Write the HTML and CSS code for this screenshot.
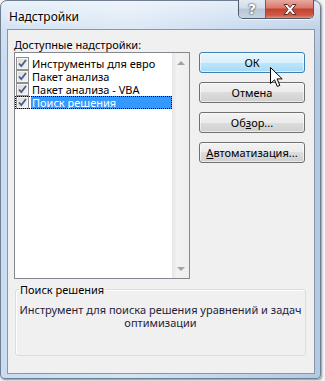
FILE: index.html
```html
<!DOCTYPE html>
<html lang="ru">
<head>
  <meta charset="UTF-8" />
  <title>Надстройки</title>
  <link rel="stylesheet" href="styles.css">
</head>
<body>
  <div class="window">
    <div class="titlebar">
      <span class="title">Надстройки</span>
      <div class="caption-buttons">
        <div class="cap help">?</div>
        <div class="cap close">
          <svg width="14" height="11" viewBox="0 0 14 11">
            <path d="M1 0.5 L4.5 0.5 L7 3.5 L9.5 0.5 L13 0.5 L9 5.5 L13 10.5 L9.5 10.5 L7 7.5 L4.5 10.5 L1 10.5 L5 5.5 Z" fill="#fff" stroke="#5a2a24" stroke-width="1"/>
          </svg>
        </div>
      </div>
    </div>

    <div class="client">
      <div class="main">
        <div class="left">
          <div class="label"><u>Д</u>оступные надстройки:</div>
          <div class="listbox">
            <ul class="items">
              <li class="item"><span class="check"></span><span class="text">Инструменты для евро</span></li>
              <li class="item"><span class="check"></span><span class="text">Пакет анализа</span></li>
              <li class="item"><span class="check"></span><span class="text">Пакет анализа - VBA</span></li>
              <li class="item selected"><span class="check"></span><span class="text">Поиск решения</span></li>
            </ul>
            <div class="scrollbar">
              <span class="arrow up"></span>
              <span class="arrow down"></span>
            </div>
          </div>
        </div>

        <div class="buttons">
          <button class="btn hover">ОК</button>
          <button class="btn">Отмена</button>
          <button class="btn">Об<u>з</u>ор...</button>
          <button class="btn"><u>А</u>втоматизация...</button>
        </div>
      </div>

      <fieldset class="group">
        <legend>Поиск решения</legend>
        <p>Инструмент для поиска решения уравнений и задач<br>оптимизации</p>
      </fieldset>
    </div>

    <!-- mouse pointer over the OK button -->
    <svg class="cursor" width="13" height="21" viewBox="0 0 13 21">
      <path d="M0.5 0.5 L0.5 16.5 L4.5 12.8 L7.3 19.5 L9.8 18.4 L7.1 11.9 L12.2 11.9 Z" fill="#fff" stroke="#000" stroke-width="1" stroke-linejoin="miter"/>
    </svg>
  </div>
</body>
</html>
```

FILE: styles.css
```css
* {
  box-sizing: border-box;
}

body {
  margin: 0;
  padding: 0;
  width: 325px;
  height: 381px;
  background: #f3f3f3;
  font-family: 'Noto Sans', 'Open Sans', sans-serif;
  font-size: 11px;
  color: #000;
  overflow: hidden;
}

.window {
  position: relative;
  width: 321px;
  height: 379px;
  border: 1px solid #6f7f91;
  border-radius: 7px 7px 4px 4px;
  background:
    linear-gradient(180deg, rgba(255,255,255,0.6) 0, rgba(255,255,255,0.15) 30px, rgba(255,255,255,0) 60px),
    linear-gradient(90deg, #c9dcf1, #d6e4f4 40%, #c2d6ee 70%, #b4c9e2);
  box-shadow: 1px 1px 2px rgba(0,0,0,0.4);
}

.titlebar {
  display: flex;
  justify-content: space-between;
  height: 28px;
  padding-left: 8px;
}

.title {
  padding-top: 7px;
  font-size: 12px;
  color: #000;
  text-shadow: 0 0 6px #fff, 0 0 4px #fff;
}

.caption-buttons {
  display: flex;
  height: 19px;
  margin-top: -1px;
  margin-right: 6px;
  border: 1px solid #4f5a68;
  border-top: none;
  border-radius: 0 0 5px 5px;
  overflow: hidden;
  box-shadow: 0 1px 0 rgba(255,255,255,0.7);
}

.cap {
  display: flex;
  align-items: center;
  justify-content: center;
  height: 100%;
}

.help {
  width: 27px;
  border-right: 1px solid #5c6673;
  background: linear-gradient(180deg, #e3eaf2 0, #d2dce8 45%, #b7c5d6 50%, #c7d4e3 100%);
  color: #fff;
  font-family: 'DejaVu Sans', sans-serif;
  font-weight: bold;
  font-size: 14px;
  text-shadow: 0 0 2px #333, 0 0 1px #333;
}

.close {
  width: 47px;
  background: linear-gradient(180deg, #e8a99f 0, #d8786b 45%, #c3402f 50%, #d05a47 85%, #e0907f 100%);
}

.client {
  margin-left: 6px;
  width: 308px;
  height: 345px;
  border: 1px solid #8796a8;
  background: #f0f0f0;
  padding: 7px 0 0 0;
}

.main {
  display: flex;
  gap: 9px;
  padding-left: 6px;
}

.label {
  height: 15px;
  line-height: 15px;
}

.listbox {
  display: flex;
  width: 176px;
  height: 227px;
  border: 1px solid #828790;
  background: #fff;
}

.items {
  flex: 1;
  list-style: none;
  margin: 0;
  padding: 4px 0 0 0;
}

.item {
  display: flex;
  align-items: center;
  height: 13px;
  padding-left: 1px;
}

.check {
  width: 13px;
  height: 13px;
  margin-right: 2px;
  border: 1px solid #8e8f8f;
  background:
    url("data:image/svg+xml,%3Csvg xmlns='http://www.w3.org/2000/svg' width='11' height='11'%3E%3Cpath d='M2 5.5 L4.3 8 L9 2' fill='none' stroke='%234a5d8a' stroke-width='1.8'/%3E%3C/svg%3E") center/11px 11px no-repeat,
    linear-gradient(135deg, #d8d8d8, #f6f6f6);
  box-shadow: inset 0 0 0 1px #f4f4f4;
}

.text {
  flex: 1;
  height: 13px;
  line-height: 13px;
  padding-left: 1px;
  white-space: nowrap;
}

.selected {
  outline: 1px dotted #000;
  outline-offset: -1px;
}

.selected .text {
  background: #3399ff;
  color: #fff;
}

.scrollbar {
  position: relative;
  width: 17px;
  background: linear-gradient(90deg, #e6e6e6, #f2f2f2 30%, #eeeeee);
}

.arrow {
  position: absolute;
  left: 5px;
  width: 0;
  height: 0;
  border-left: 4px solid transparent;
  border-right: 4px solid transparent;
}

.arrow.up {
  top: 8px;
  border-bottom: 4px solid #a3a3a3;
}

.arrow.down {
  bottom: 7px;
  border-top: 4px solid #a3a3a3;
}

.buttons {
  display: flex;
  flex-direction: column;
  gap: 9px;
  padding-top: 15px;
}

.btn {
  width: 106px;
  height: 21px;
  padding: 0;
  border: 1px solid #707070;
  border-radius: 3px;
  background: linear-gradient(180deg, #f2f2f2 0, #ebebeb 50%, #dddddd 50%, #cfcfcf 100%);
  box-shadow: inset 0 0 0 1px rgba(255,255,255,0.6);
  font-family: inherit;
  font-size: 11px;
  color: #000;
}

.btn.hover {
  border-color: #3c7fb1;
  background: linear-gradient(180deg, #eaf6fd 0, #d9f0fc 50%, #bee6fd 50%, #a7d9f5 100%);
}

.group {
  margin: 3px 8px 0 7px;
  height: 74px;
  padding: 0;
  border: 1px solid #d5dfe5;
  border-radius: 3px;
  box-shadow: inset 1px 1px 0 #fff;
}

.group legend {
  margin-left: 3px;
  padding: 0 1px;
  line-height: 15px;
  color: #000;
}

.group p {
  margin: 6px 0 0 0;
  padding: 0;
  line-height: 13px;
  text-align: center;
  white-space: nowrap;
  color: #1e1e3a;
}

.cursor {
  position: absolute;
  left: 269px;
  top: 66px;
}
```
